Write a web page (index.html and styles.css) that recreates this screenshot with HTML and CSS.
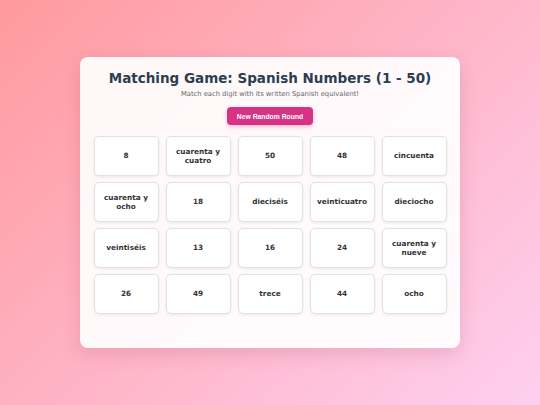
FILE: index.html
```html
<!DOCTYPE html>
<html lang="en">
<head>
<meta charset="utf-8">
<title>Matching Game: Spanish Numbers</title>
<link rel="stylesheet" href="styles.css">
</head>
<body>
<main class="game">
  <h1 class="title">Matching Game: Spanish Numbers (1 - 50)</h1>
  <p class="subtitle">Match each digit with its written Spanish equivalent!</p>
  <button class="new-round" type="button">New Random Round</button>
  <div class="board">
    <div class="tile">8</div>
    <div class="tile">cuarenta y cuatro</div>
    <div class="tile">50</div>
    <div class="tile">48</div>
    <div class="tile">cincuenta</div>
    <div class="tile">cuarenta y ocho</div>
    <div class="tile">18</div>
    <div class="tile">dieciséis</div>
    <div class="tile">veinticuatro</div>
    <div class="tile">dieciocho</div>
    <div class="tile">veintiséis</div>
    <div class="tile">13</div>
    <div class="tile">16</div>
    <div class="tile">24</div>
    <div class="tile">cuarenta y nueve</div>
    <div class="tile">26</div>
    <div class="tile">49</div>
    <div class="tile">trece</div>
    <div class="tile">44</div>
    <div class="tile">ocho</div>
  </div>
</main>
</body>
</html>
```

FILE: styles.css
```css
html, body {
  margin: 0;
  height: 100%;
}

body {
  background: linear-gradient(135deg, #ff9a9e 0%, #fecfef 100%);
  font-family: "DejaVu Sans", Verdana, sans-serif;
  display: flex;
  justify-content: center;
  align-items: flex-start;
  padding-top: 57px;
  box-sizing: border-box;
}

.game {
  width: 380px;
  box-sizing: border-box;
  padding: 13px 13px 34px;
  background: rgba(255, 255, 255, 0.92);
  border-radius: 8px;
  box-shadow: 0 6px 18px rgba(160, 60, 90, 0.18);
  text-align: center;
}

.title {
  margin: 0;
  font-size: 13.5px;
  font-weight: bold;
  color: #2c3e50;
  line-height: 17px;
  white-space: nowrap;
}

.subtitle {
  margin: 2px 0 0;
  font-size: 6.75px;
  color: #666;
  line-height: 10px;
}

.new-round {
  display: block;
  margin: 8px auto 0;
  width: 86px;
  height: 18px;
  border: none;
  border-radius: 4px;
  background: #d63384;
  color: #fff;
  font-family: "Liberation Sans", Arial, sans-serif;
  font-weight: bold;
  font-size: 6.8px;
  box-shadow: 0 2px 4px rgba(214, 51, 132, 0.3);
  padding: 0;
}

.board {
  margin-top: 11px;
  display: grid;
  grid-template-columns: repeat(5, 65px);
  grid-auto-rows: 40px;
  gap: 6px 7px;
  justify-content: center;
}

.tile {
  background: #fff;
  border: 1px solid #e2e2e2;
  border-radius: 5px;
  box-shadow: 0 1px 3px rgba(0, 0, 0, 0.08);
  display: flex;
  align-items: center;
  justify-content: center;
  padding: 0 6px;
  font-size: 7.3px;
  font-weight: bold;
  color: #333;
  line-height: 9.3px;
}
```
